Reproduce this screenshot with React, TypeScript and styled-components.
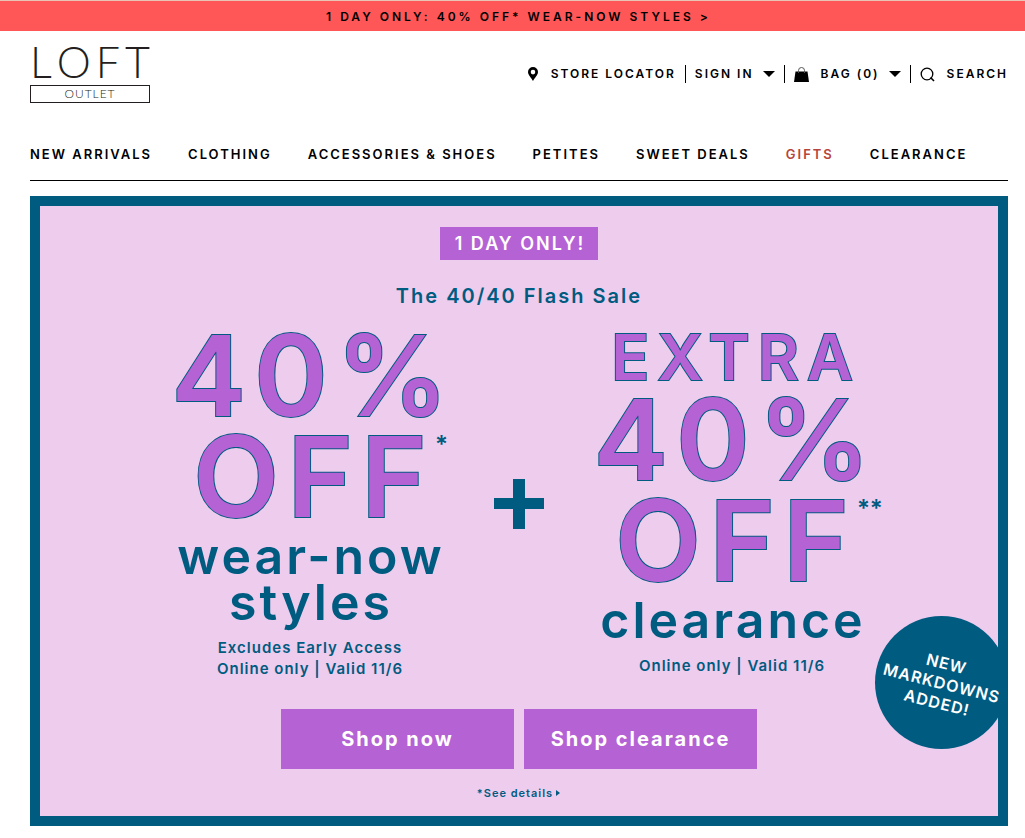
import React from 'react';
import styled, { createGlobalStyle } from 'styled-components';

const navy = '#005b80';
const purple = '#b562d5';
const pink = '#eeccee';

const GlobalStyle = createGlobalStyle`
  *, *::before, *::after { box-sizing: border-box; }
  body {
    margin: 0;
    background: #fff;
    color: #000;
    font-family: Inter, "Liberation Sans", sans-serif;
  }
  a { color: inherit; text-decoration: none; }
  button { font-family: inherit; cursor: pointer; }
  h1, h2, p, ul { margin: 0; padding: 0; }
`;

const PromoBar = styled.a`
  display: block;
  border-top: 1px solid #e9c3b4;
  background: #ff5757;
  font-size: 12px;
  font-weight: 600;
  line-height: 28px;
  letter-spacing: 3px;
  text-align: center;
  padding: 2px 0 0 12px;
`;

const Page = styled.div`
  padding: 0 17px 12px 30px;
`;

const Header = styled.header`
  display: flex;
  justify-content: space-between;
  align-items: flex-start;
  padding-top: 14px;
`;

const Logo = styled.a`
  display: flex;
  flex-direction: column;
  width: 120px;
  font-family: Lato, Inter, sans-serif;
  font-weight: 300;
  color: #231f20;
`;

const LogoName = styled.span`
  display: flex;
  justify-content: space-between;
  font-size: 43px;
  line-height: 34px;
`;

const LogoSub = styled.span`
  margin-top: 6px;
  border: 1px solid #231f20;
  font-size: 12px;
  line-height: 16px;
  letter-spacing: 1px;
  text-align: center;
`;

const Utilities = styled.div`
  display: flex;
  align-items: center;
  padding-top: 20px;
`;

const UtilityItem = styled.div<{ $divided?: boolean }>`
  display: flex;
  align-items: center;
  height: 18px;
  padding: 0 9px;
  border-left: ${(p) => (p.$divided ? '1px solid #000' : '0')};
  &:last-child { padding-right: 0; }
`;

const UtilityButton = styled.button`
  display: flex;
  align-items: center;
  padding: 0;
  border: 0;
  background: none;
  color: #000;
  font-size: 12px;
  font-weight: 600;
  line-height: 18px;
  letter-spacing: 2px;
  white-space: nowrap;
  svg + span { margin-left: 12px; }
  span + svg { margin-left: 9px; }
`;

const Nav = styled.nav`
  margin-top: 40px;
  padding-bottom: 15px;
  border-bottom: 1px solid #000;
`;

const NavList = styled.ul`
  display: flex;
  flex-wrap: wrap;
  column-gap: 36px;
  list-style: none;
`;

const NavLink = styled.a<{ $accent?: boolean }>`
  display: block;
  font-size: 13px;
  font-weight: 600;
  line-height: 22px;
  letter-spacing: 2px;
  color: ${(p) => (p.$accent ? '#b8443c' : '#000')};
`;

const Hero = styled.section`
  position: relative;
  display: flex;
  flex-direction: column;
  align-items: center;
  margin-top: 15px;
  padding: 21px 0 12px;
  border: 10px solid ${navy};
  background: ${pink};
  color: ${navy};
`;

const Tag = styled.p`
  padding: 0 13px 0 15px;
  background: ${purple};
  color: #fff;
  font-size: 18px;
  font-weight: 600;
  line-height: 33px;
  letter-spacing: 2px;
`;

const SaleTitle = styled.h1`
  margin-top: 22px;
  font-size: 20px;
  font-weight: 600;
  line-height: 28px;
  letter-spacing: 2px;
`;

const Offers = styled.div`
  display: grid;
  grid-template-columns: 370px 52px 370px;
  align-items: start;
  margin-top: 15px;
`;

const Offer = styled.div`
  display: flex;
  flex-direction: column;
  align-items: center;
  text-align: center;
`;

const Big = styled.h2<{ $small?: boolean }>`
  position: relative;
  padding-left: 12px;
  font-size: ${(p) => (p.$small ? '63px' : '112px')};
  font-weight: 600;
  line-height: ${(p) => (p.$small ? '64px' : '101px')};
  letter-spacing: 8px;
  color: ${purple};
  -webkit-text-stroke: 2px ${navy};
  paint-order: stroke fill;
`;

const Mark = styled.sup`
  position: absolute;
  top: 7px;
  left: 100%;
  font-size: 24px;
  line-height: 24px;
  letter-spacing: 0;
  color: ${navy};
  -webkit-text-stroke: 0;
`;

const Subject = styled.p`
  margin-top: 6px;
  padding-left: 6px;
  font-size: 50px;
  font-weight: 600;
  line-height: 46px;
  letter-spacing: 3px;
`;

const Terms = styled.p`
  margin-top: 12px;
  padding-left: 4px;
  font-size: 15px;
  font-weight: 600;
  line-height: 21px;
  letter-spacing: 1px;
`;

const PlusIcon = styled.svg`
  margin-top: 153px;
`;

const Actions = styled.div`
  display: flex;
  gap: 10px;
  margin-top: 30px;
`;

const ShopButton = styled.button`
  width: 233px;
  height: 60px;
  padding: 0;
  border: 0;
  background: ${purple};
  color: #fff;
  font-size: 20px;
  font-weight: 700;
  letter-spacing: 2px;
`;

const Details = styled.a`
  display: flex;
  align-items: center;
  gap: 3px;
  margin-top: 13px;
  font-size: 11px;
  font-weight: 600;
  line-height: 22px;
  letter-spacing: 1px;
`;

const Sticker = styled.div`
  position: absolute;
  right: -10px;
  bottom: 67px;
  display: flex;
  align-items: center;
  justify-content: center;
  width: 133px;
  height: 133px;
  border-radius: 50%;
  background: ${navy};
  color: #fff;
`;

const StickerText = styled.p`
  transform: rotate(14deg);
  font-size: 16px;
  font-weight: 600;
  line-height: 20px;
  letter-spacing: 1px;
  text-align: center;
`;

const Caret = () => (
  <svg width="12" height="6" viewBox="0 0 12 6" aria-hidden="true">
    <path d="M0 0H12L6 6Z" />
  </svg>
);

const links = ['New Arrivals', 'Clothing', 'Accessories & Shoes', 'Petites', 'Sweet Deals', 'Gifts', 'Clearance'];

export default function App() {
  return (
    <>
      <GlobalStyle />
      <PromoBar href="#wear-now">1 DAY ONLY: 40% OFF* WEAR-NOW STYLES &gt;</PromoBar>
      <Page>
        <Header>
          <Logo href="#home" aria-label="LOFT Outlet">
            <LogoName>
              <span>L</span><span>O</span><span>F</span><span>T</span>
            </LogoName>
            <LogoSub>OUTLET</LogoSub>
          </Logo>
          <Utilities>
            <UtilityItem>
              <UtilityButton>
                <svg width="12" height="14" viewBox="0 0 12 14" aria-hidden="true">
                  <path fillRule="evenodd" d="M6 0a5 5 0 0 1 5 5c0 3-3.600 6-5 9C4.600 11 1 8 1 5a5 5 0 0 1 5-5Zm0 2.800a2.300 2.300 0 1 0 0 4.600 2.300 2.300 0 0 0 0-4.600Z" />
                </svg>
                <span>STORE LOCATOR</span>
              </UtilityButton>
            </UtilityItem>
            <UtilityItem $divided>
              <UtilityButton><span>SIGN IN</span><Caret /></UtilityButton>
            </UtilityItem>
            <UtilityItem $divided>
              <UtilityButton>
                <svg width="15" height="15" viewBox="0 0 15 15" aria-hidden="true">
                  <path d="M1.500 4.500H13.500L15 15H0Z" />
                  <path d="M4.500 6V3.500a3 3 0 0 1 6 0V6" fill="none" stroke="#555" />
                </svg>
                <span>BAG (0)</span><Caret />
              </UtilityButton>
            </UtilityItem>
            <UtilityItem $divided>
              <UtilityButton>
                <svg width="15" height="15" viewBox="0 0 15 15" fill="none" stroke="#000" aria-hidden="true">
                  <circle cx="7" cy="7" r="5.800" strokeWidth="1.300" />
                  <path d="M10.500 10.500L14 14" strokeWidth="1.600" />
                </svg>
                <span>SEARCH</span>
              </UtilityButton>
            </UtilityItem>
          </Utilities>
        </Header>
        <Nav>
          <NavList>
            {links.map((l) => (
              <li key={l}>
                <NavLink href="#shop" $accent={l === 'Gifts'}>{l.toUpperCase()}</NavLink>
              </li>
            ))}
          </NavList>
        </Nav>
        <Hero>
          <Tag>1 DAY ONLY!</Tag>
          <SaleTitle>The 40/40 Flash Sale</SaleTitle>
          <Offers>
            <Offer>
              <Big>40%</Big>
              <Big>OFF<Mark>*</Mark></Big>
              <Subject>wear-now<br />styles</Subject>
              <Terms>Excludes Early Access<br />Online only | Valid 11/6</Terms>
            </Offer>
            <PlusIcon width="52" height="52" viewBox="0 0 52 52" fill={navy} aria-hidden="true">
              <path d="M20 1H32V20H51V31H32V51H20V31H1V20H20Z" />
            </PlusIcon>
            <Offer>
              <Big $small>EXTRA</Big>
              <Big>40%</Big>
              <Big>OFF<Mark>**</Mark></Big>
              <Subject>clearance</Subject>
              <Terms>Online only | Valid 11/6</Terms>
            </Offer>
          </Offers>
          <Actions>
            <ShopButton>Shop now</ShopButton>
            <ShopButton>Shop clearance</ShopButton>
          </Actions>
          <Details href="#details">
            *See details
            <svg width="5" height="6" viewBox="0 0 5 6" fill={navy} aria-hidden="true">
              <path d="M0 0L4 3L0 6Z" />
            </svg>
          </Details>
          <Sticker>
            <StickerText>NEW<br />MARKDOWNS<br />ADDED!</StickerText>
          </Sticker>
        </Hero>
      </Page>
    </>
  );
}
